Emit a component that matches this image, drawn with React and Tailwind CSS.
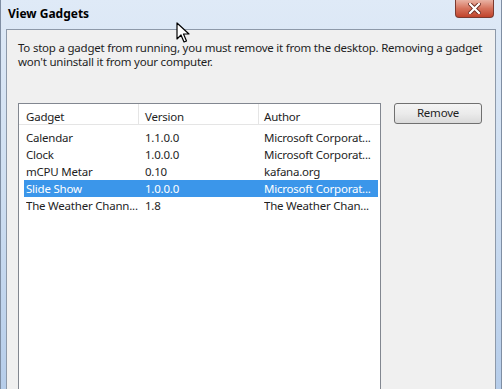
import React from 'react';

const rows = [
  { name: 'Calendar', version: '1.1.0.0', author: 'Microsoft Corporat...' },
  { name: 'Clock', version: '1.0.0.0', author: 'Microsoft Corporat...' },
  { name: 'mCPU Metar', version: '0.10', author: 'kafana.org' },
  { name: 'Slide Show', version: '1.0.0.0', author: 'Microsoft Corporat...', selected: true },
  { name: 'The Weather Chann...', version: '1.8', author: 'The Weather Chan...' },
];

function CloseButton() {
  return (
    <div className="absolute top-0 right-[8px] w-[39px] h-[18px] rounded-b-[4px] border border-t-0 border-[#7b3a2f] bg-gradient-to-b from-[#e9b2a4] via-[#d5725c] to-[#c0432b] flex items-center justify-center">
      <svg width="13" height="11" viewBox="0 0 13 11">
        <path d="M2 1 L11 10 M11 1 L2 10" stroke="#6d2a20" strokeWidth="4" strokeLinecap="square" />
        <path d="M2 1 L11 10 M11 1 L2 10" stroke="#ffffff" strokeWidth="2.2" strokeLinecap="square" />
      </svg>
    </div>
  );
}

function Cursor() {
  return (
    <svg className="absolute left-[176px] top-[22px]" width="14" height="22" viewBox="0 0 14 22">
      <path
        d="M1 1 L1 17 L5 13 L8 20 L10.5 19 L7.5 12 L13 12 Z"
        fill="#ffffff"
        stroke="#000000"
        strokeWidth="1.2"
        strokeLinejoin="round"
      />
    </svg>
  );
}

export default function App() {
  return (
    <div className="relative w-[502px] h-[389px] overflow-hidden bg-gradient-to-b from-[#dfeaf7] via-[#cedef1] to-[#b6cdea] font-['Noto_Sans',sans-serif] text-[11.5px] tracking-[-0.22px] text-[#1a1a1a]">
      <div className="h-full flex flex-col border-x border-[#7f8ea3] px-[5px]">
        {/* title bar */}
        <div className="h-[29px] shrink-0 flex items-center pl-[2px] pb-[1px] font-bold text-[12px] tracking-normal text-black">
          View Gadgets
        </div>

        {/* client area */}
        <div className="flex-1 min-h-0 border border-b-0 border-[#8d99a9] bg-[#f0f0f0] pl-[11px] pt-[11px] flex flex-col">
          <p className="leading-[13.5px] text-[#1e1e1e] whitespace-nowrap">
            To stop a gadget from running, you must remove it from the desktop. Removing a gadget
            <br />
            won&apos;t uninstall it from your computer.
          </p>

          <div className="mt-[35px] flex flex-1 min-h-0 gap-[13px]">
            {/* list view */}
            <div className="w-[363px] border border-b-0 border-[#828790] bg-white flex flex-col">
              <div className="h-[21px] shrink-0 flex border-b border-[#e5e5e5] text-[#1e1e1e]">
                <div className="w-[120px] pl-[7px] pt-[4px] border-r border-[#e5e5e5]">Gadget</div>
                <div className="w-[120px] pl-[6px] pt-[4px] border-r border-[#e5e5e5]">Version</div>
                <div className="flex-1 pl-[5px] pt-[4px]">Author</div>
              </div>
              <div className="pt-[4px] pl-[5px] pr-[2px]">
                {rows.map((r) => (
                  <div
                    key={r.name}
                    className={
                      'h-[17px] flex items-center whitespace-nowrap pl-[2px] ' +
                      (r.selected ? 'bg-[#3b96ea] text-white' : 'text-[#1e1e1e]')
                    }
                  >
                    <span className="w-[119px] overflow-hidden">{r.name}</span>
                    <span className="w-[119px] overflow-hidden">{r.version}</span>
                    <span className="flex-1 overflow-hidden">{r.author}</span>
                  </div>
                ))}
              </div>
            </div>

            {/* buttons */}
            <div>
              <button className="w-[88px] h-[21px] rounded-[3px] border border-[#707070] bg-gradient-to-b from-[#f4f4f4] via-[#ebebeb] to-[#dadada] text-[#1e1e1e] leading-none pb-[2px]">
                Remove
              </button>
            </div>
          </div>
        </div>
      </div>

      <CloseButton />
      <Cursor />
    </div>
  );
}
